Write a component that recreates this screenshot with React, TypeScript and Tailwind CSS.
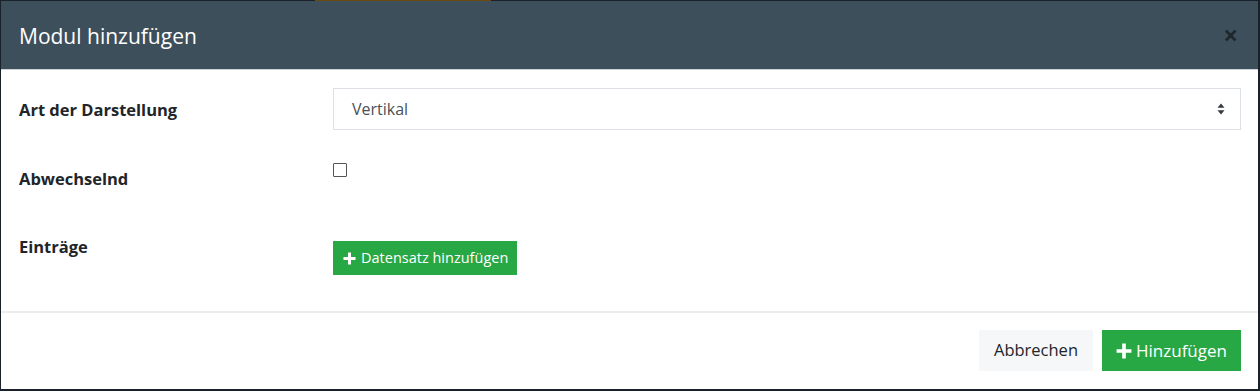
import React, { useState } from 'react';

const PlusIcon: React.FC<{ size: number }> = ({ size }) => (
    <svg width={size} height={size} viewBox="0 0 14 14" className="shrink-0">
        <path d="M5.4 0.5h3.2v4.9h4.9v3.2H8.6v4.9H5.4V8.6H0.5V5.4h4.9z" fill="currentColor" />
    </svg>
);

const SortIcon = () => (
    <svg width="8" height="12" viewBox="0 0 8 12">
        <path d="M4 0.5 L7.5 4.8 H0.5 Z" fill="#343a40" />
        <path d="M4 11.5 L7.5 7.2 H0.5 Z" fill="#343a40" />
    </svg>
);

const App: React.FC = () => {
    const [alternating, setAlternating] = useState(false);

    return (
        <div className="relative w-[1260px] h-[391px] bg-[#19212b] pt-[1px] pl-[1px] pr-[2px] pb-[2px] font-['Open_Sans',sans-serif] overflow-hidden">
            {/* strip of the page behind */}
            <div className="absolute top-0 left-[315px] w-[176px] h-[1px] bg-[#6b4a12]"></div>

            <div className="flex flex-col h-full bg-white">
                {/* Header */}
                <header className="h-[69px] shrink-0 flex items-center justify-between pl-[18px] pr-[20px] bg-[#3e4f5c] border-b border-[#cdd3d9]">
                    <h2 className="text-[21px] leading-none text-white mt-[3px]">Modul hinzufügen</h2>
                    <button className="text-[26px] font-bold leading-none text-black/50 -mt-[1px]">×</button>
                </header>

                {/* Body */}
                <div className="flex-1 pt-[18px] pl-[18px] pr-[17px] text-[#212529]">
                    <div className="flex">
                        <label className="w-[314px] shrink-0 mt-[11px] text-[16.5px] leading-[22px] font-bold">Art der Darstellung</label>
                        <div className="flex-1 h-[42px] border border-[#dde1e5] flex items-center justify-between pl-[18px] pr-[15px]">
                            <span className="text-[16px] text-[#495057]">Vertikal</span>
                            <SortIcon />
                        </div>
                    </div>

                    <div className="flex mt-[20px]">
                        <label className="w-[314px] shrink-0 mt-[18px] text-[16.5px] leading-[22px] font-bold">Abwechselnd</label>
                        <button
                            onClick={() => setAlternating(!alternating)}
                            className="mt-[13px] w-[14px] h-[14px] border border-[#555] bg-white rounded-[1px] flex items-center justify-center text-[10px]"
                        >
                            {alternating ? '✓' : ''}
                        </button>
                    </div>

                    <div className="flex mt-[39px]">
                        <label className="w-[314px] shrink-0 mt-[7px] text-[16.5px] leading-[22px] font-bold">Einträge</label>
                        <button className="mt-[12px] h-[34px] w-[184px] bg-[#28a745] text-white flex items-center gap-[5px] pl-[10px] text-[14.5px]">
                            <PlusIcon size={13} />
                            Datensatz hinzufügen
                        </button>
                    </div>
                </div>

                {/* Footer */}
                <footer className="h-[78px] shrink-0 border-t-2 border-[#ececf1] flex items-start justify-end gap-[9px] pt-[17px] pr-[17px]">
                    <button className="h-[41px] w-[114px] bg-[#f6f7f9] text-[16.5px] text-[#212529]">Abbrechen</button>
                    <button className="h-[41px] w-[139px] bg-[#28a745] text-white text-[17px] flex items-center justify-center gap-[4px]">
                        <PlusIcon size={16} />
                        Hinzufügen
                    </button>
                </footer>
            </div>
        </div>
    );
};

export default App;
